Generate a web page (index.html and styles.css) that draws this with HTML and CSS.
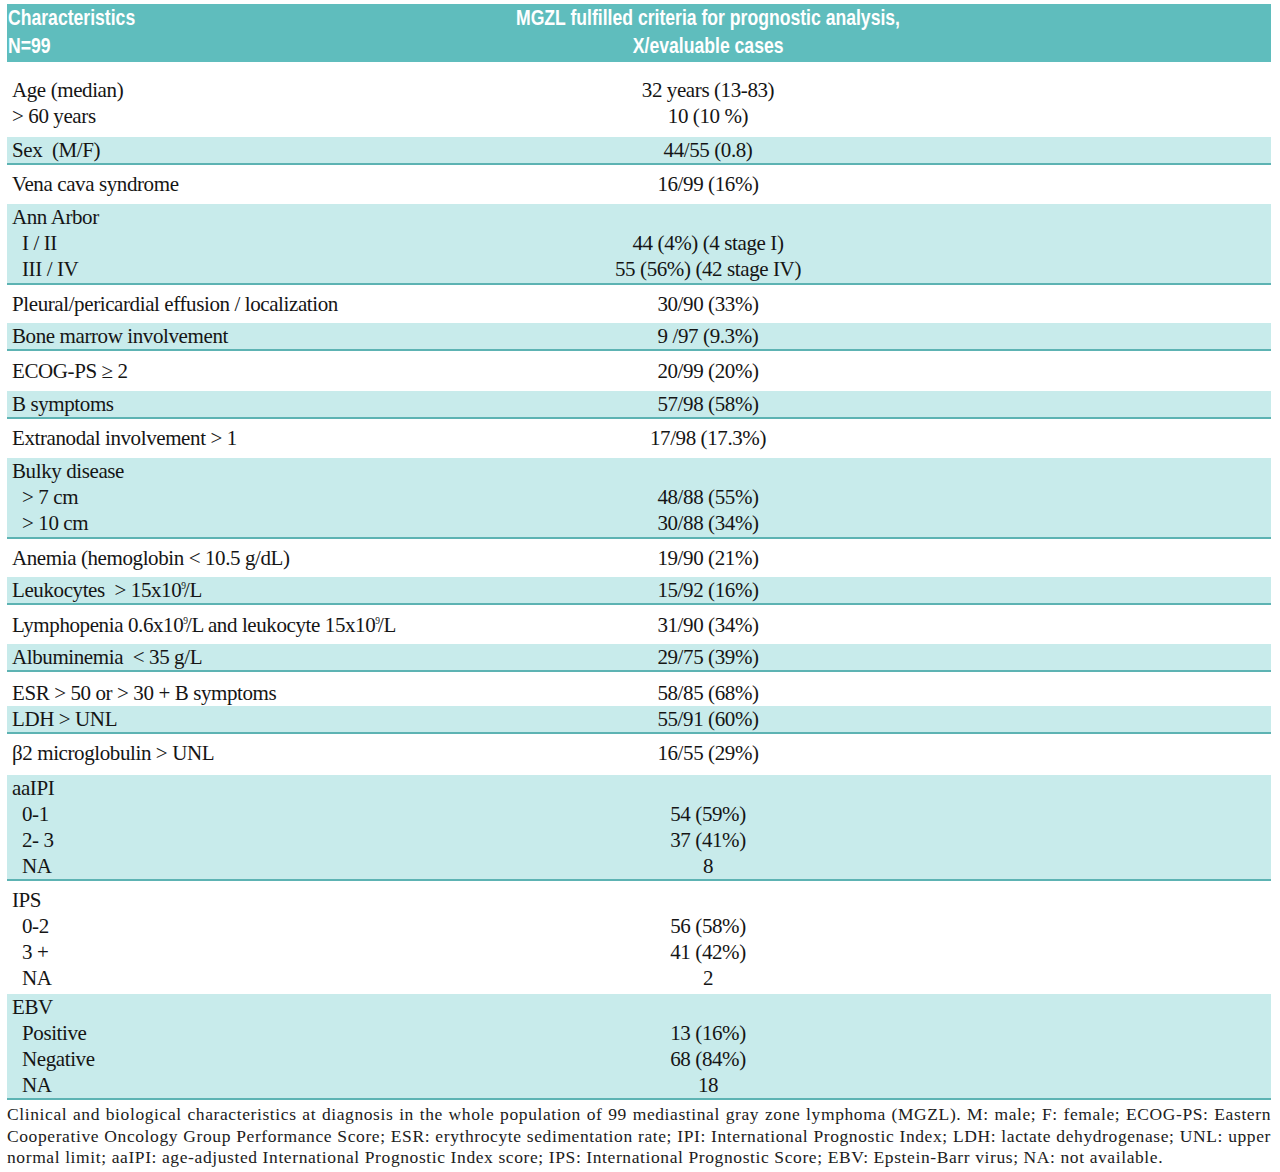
FILE: index.html
```
<!DOCTYPE html>
<html lang="en">
<head>
<meta charset="utf-8">
<title>MGZL characteristics</title>
<link rel="stylesheet" href="styles.css">
</head>
<body>
<div class="page">
  <div class="table">
    <div class="row head">
      <div class="c1"><div class="hl"><span class="hx">Characteristics</span></div><div class="hl"><span class="hx">N=99</span></div></div>
      <div class="c2"><div class="hl"><span class="hx">MGZL fulfilled criteria for prognostic analysis,</span></div><div class="hl"><span class="hx">X/evaluable cases</span></div></div>
    </div>

    <div class="row w p-age">
      <div class="c1"><div class="ln">Age (median)</div><div class="ln">&gt; 60 years</div></div>
      <div class="c2"><div class="ln">32 years (13-83)</div><div class="ln">10 (10 %)</div></div>
    </div>
    <div class="row s">
      <div class="c1"><div class="ln">Sex&nbsp; (M/F)</div></div>
      <div class="c2"><div class="ln">44/55 (0.8)</div></div>
    </div>
    <div class="row w p-67">
      <div class="c1"><div class="ln">Vena cava syndrome</div></div>
      <div class="c2"><div class="ln">16/99 (16%)</div></div>
    </div>
    <div class="row s multi">
      <div class="c1"><div class="ln">Ann Arbor</div><div class="ln sub">I / II</div><div class="ln sub">III / IV</div></div>
      <div class="c2"><div class="ln">&nbsp;</div><div class="ln">44 (4%) (4 stage I)</div><div class="ln">55 (56%) (42 stage IV)</div></div>
    </div>
    <div class="row w p-66">
      <div class="c1"><div class="ln">Pleural/pericardial effusion / localization</div></div>
      <div class="c2"><div class="ln">30/90 (33%)</div></div>
    </div>
    <div class="row s">
      <div class="c1"><div class="ln">Bone marrow involvement</div></div>
      <div class="c2"><div class="ln">9 /97 (9.3%)</div></div>
    </div>
    <div class="row w p-77">
      <div class="c1"><div class="ln">ECOG-PS ≥ 2</div></div>
      <div class="c2"><div class="ln">20/99 (20%)</div></div>
    </div>
    <div class="row s">
      <div class="c1"><div class="ln">B symptoms</div></div>
      <div class="c2"><div class="ln">57/98 (58%)</div></div>
    </div>
    <div class="row w p-67">
      <div class="c1"><div class="ln">Extranodal involvement &gt; 1</div></div>
      <div class="c2"><div class="ln">17/98 (17.3%)</div></div>
    </div>
    <div class="row s multi">
      <div class="c1"><div class="ln">Bulky disease</div><div class="ln sub">&gt; 7 cm</div><div class="ln sub">&gt; 10 cm</div></div>
      <div class="c2"><div class="ln">&nbsp;</div><div class="ln">48/88 (55%)</div><div class="ln">30/88 (34%)</div></div>
    </div>
    <div class="row w p-66">
      <div class="c1"><div class="ln">Anemia (hemoglobin &lt; 10.5 g/dL)</div></div>
      <div class="c2"><div class="ln">19/90 (21%)</div></div>
    </div>
    <div class="row s">
      <div class="c1"><div class="ln">Leukocytes&nbsp; &gt; 15x10<sup>9</sup>/L</div></div>
      <div class="c2"><div class="ln">15/92 (16%)</div></div>
    </div>
    <div class="row w p-76">
      <div class="c1"><div class="ln">Lymphopenia 0.6x10<sup>9</sup>/L and leukocyte 15x10<sup>9</sup>/L</div></div>
      <div class="c2"><div class="ln">31/90 (34%)</div></div>
    </div>
    <div class="row s">
      <div class="c1"><div class="ln">Albuminemia&nbsp; &lt; 35 g/L</div></div>
      <div class="c2"><div class="ln">29/75 (39%)</div></div>
    </div>
    <div class="row w p-80">
      <div class="c1"><div class="ln">ESR &gt; 50 or &gt; 30 + B symptoms</div></div>
      <div class="c2"><div class="ln">58/85 (68%)</div></div>
    </div>
    <div class="row s">
      <div class="c1"><div class="ln">LDH &gt; UNL</div></div>
      <div class="c2"><div class="ln">55/91 (60%)</div></div>
    </div>
    <div class="row w p-69">
      <div class="c1"><div class="ln">β2 microglobulin &gt; UNL</div></div>
      <div class="c2"><div class="ln">16/55 (29%)</div></div>
    </div>
    <div class="row s">
      <div class="c1"><div class="ln">aaIPI</div><div class="ln sub">0-1</div><div class="ln sub">2- 3</div><div class="ln sub">NA</div></div>
      <div class="c2"><div class="ln">&nbsp;</div><div class="ln">54 (59%)</div><div class="ln">37 (41%)</div><div class="ln">8</div></div>
    </div>
    <div class="row w p-63">
      <div class="c1"><div class="ln">IPS</div><div class="ln sub">0-2</div><div class="ln sub">3 +</div><div class="ln sub">NA</div></div>
      <div class="c2"><div class="ln">&nbsp;</div><div class="ln">56 (58%)</div><div class="ln">41 (42%)</div><div class="ln">2</div></div>
    </div>
    <div class="row s">
      <div class="c1"><div class="ln">EBV</div><div class="ln sub">Positive</div><div class="ln sub">Negative</div><div class="ln sub">NA</div></div>
      <div class="c2"><div class="ln">&nbsp;</div><div class="ln">13 (16%)</div><div class="ln">68 (84%)</div><div class="ln">18</div></div>
    </div>
  </div>

  <div class="caption">
    <span class="cl just">Clinical and biological characteristics at diagnosis in the whole population of 99 mediastinal gray zone lymphoma (MGZL). M: male; F: female; ECOG-PS: Eastern</span>
    <span class="cl just">Cooperative Oncology Group Performance Score; ESR: erythrocyte sedimentation rate; IPI: International Prognostic Index; LDH: lactate dehydrogenase; UNL: upper</span>
    <span class="cl">normal limit; aaIPI: age-adjusted International Prognostic Index score; IPS: International Prognostic Score; EBV: Epstein-Barr virus; NA: not available.</span>
  </div>
</div>
</body>
</html>
```
FILE: styles.css
```
html, body {
  margin: 0;
  padding: 0;
  background: #ffffff;
}

.page {
  padding: 4px 9px 0 7px;
  color: #151515;
  font-family: "Liberation Serif", "Times New Roman", serif;
}

.table {
  display: flex;
  flex-direction: column;
}

.row {
  display: grid;
  grid-template-columns: 410px 582px 1fr;
}

.head {
  background: #5fbdbd;
  color: #ffffff;
  font-family: "Liberation Sans", Arial, sans-serif;
  font-weight: bold;
  font-size: 22px;
  line-height: 28px;
  padding-bottom: 2px;
}

.hl {
  height: 28px;
  white-space: nowrap;
}

.hx {
  display: inline-block;
  transform: scaleX(0.8);
}

.head .c1 .hx {
  transform-origin: left center;
  margin-left: 1px;
}

.head .c2 {
  text-align: center;
}

.head .c2 .hx {
  transform-origin: center center;
}

.ln {
  font-size: 21px;
  letter-spacing: -0.4px;
  line-height: 26px;
  white-space: nowrap;
}

.c1 .ln {
  padding-left: 5px;
}

.c1 .ln.sub {
  padding-left: 15px;
}

.c2 .ln {
  text-align: center;
}

sup {
  font-size: 0.45em;
  line-height: 0;
  vertical-align: 0.8em;
  letter-spacing: 0;
  margin-right: -2px;
}

.s {
  background: #c8ebeb;
  border-bottom: 2px solid #5db3b3;
}

.s.multi {
  padding-bottom: 1px;
}

.w {
  background: #ffffff;
}

.p-age { padding: 15px 0 8px; }
.p-67 { padding: 6px 0 7px; }
.p-66 { padding: 6px 0 6px; }
.p-77 { padding: 7px 0 7px; }
.p-76 { padding: 7px 0 6px; }
.p-80 { padding: 8px 0 0; }
.p-69 { padding: 6px 0 9px; }
.p-63 { padding: 6px 0 3px; }

.caption {
  margin-top: 4px;
  font-size: 17.5px;
  letter-spacing: 0.6px;
  line-height: 21.5px;
  color: #202020;
}

.cl {
  display: block;
  white-space: nowrap;
}

.cl.just {
  text-align: justify;
  text-align-last: justify;
}
```
